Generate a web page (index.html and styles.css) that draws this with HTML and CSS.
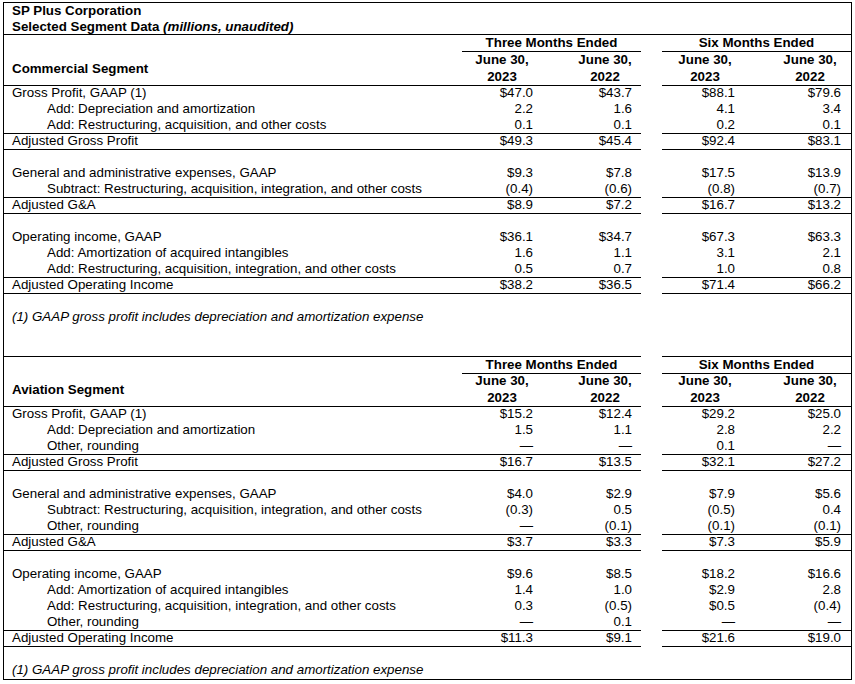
FILE: index.html
```html
<!DOCTYPE html>
<html>
<head>
<meta charset="utf-8">
<link rel="stylesheet" href="styles.css">
<title>SP Plus Corporation</title>
</head>
<body>
<div class="sheet">
  <div class="row"><div class="cell full lab b">SP Plus Corporation</div></div>
  <div class="row rule-full"><div class="cell full lab b">Selected Segment Data <i>(millions, unaudited)</i></div></div>

  <div class="row spanrow tall">
    <div class="cell"></div>
    <div class="cell span b ul">Three Months Ended</div>
    <div class="cell gap"></div>
    <div class="cell span b ul">Six Months Ended</div>
  </div>
  <div class="row head ruled">
    <div class="cell lab b mid">Commercial Segment</div>
    <div class="cell hd h1 b">June 30,<br>2023</div>
    <div class="cell hd h2 b">June 30,<br>2022</div>
    <div class="cell gap"></div>
    <div class="cell hd h3 b">June 30,<br>2023</div>
    <div class="cell hd h4 b">June 30,<br>2022</div>
  </div>

  <div class="row"><div class="cell lab">Gross Profit, GAAP (1)</div><div class="cell n1">$47.0</div><div class="cell n2">$43.7</div><div class="cell gap"></div><div class="cell n3">$88.1</div><div class="cell n4">$79.6</div></div>
  <div class="row"><div class="cell lab ind">Add: Depreciation and amortization</div><div class="cell n1">2.2</div><div class="cell n2">1.6</div><div class="cell gap"></div><div class="cell n3">4.1</div><div class="cell n4">3.4</div></div>
  <div class="row ruled"><div class="cell lab ind">Add: Restructuring, acquisition, and other costs</div><div class="cell n1">0.1</div><div class="cell n2">0.1</div><div class="cell gap"></div><div class="cell n3">0.2</div><div class="cell n4">0.1</div></div>
  <div class="row ruled"><div class="cell lab">Adjusted Gross Profit</div><div class="cell n1">$49.3</div><div class="cell n2">$45.4</div><div class="cell gap"></div><div class="cell n3">$92.4</div><div class="cell n4">$83.1</div></div>
  <div class="row"></div>
  <div class="row"><div class="cell lab">General and administrative expenses, GAAP</div><div class="cell n1">$9.3</div><div class="cell n2">$7.8</div><div class="cell gap"></div><div class="cell n3">$17.5</div><div class="cell n4">$13.9</div></div>
  <div class="row ruled"><div class="cell lab ind">Subtract: Restructuring, acquisition, integration, and other costs</div><div class="cell n1">(0.4)</div><div class="cell n2">(0.6)</div><div class="cell gap"></div><div class="cell n3">(0.8)</div><div class="cell n4">(0.7)</div></div>
  <div class="row ruled"><div class="cell lab">Adjusted G&amp;A</div><div class="cell n1">$8.9</div><div class="cell n2">$7.2</div><div class="cell gap"></div><div class="cell n3">$16.7</div><div class="cell n4">$13.2</div></div>
  <div class="row"></div>
  <div class="row"><div class="cell lab">Operating income, GAAP</div><div class="cell n1">$36.1</div><div class="cell n2">$34.7</div><div class="cell gap"></div><div class="cell n3">$67.3</div><div class="cell n4">$63.3</div></div>
  <div class="row"><div class="cell lab ind">Add: Amortization of acquired intangibles</div><div class="cell n1">1.6</div><div class="cell n2">1.1</div><div class="cell gap"></div><div class="cell n3">3.1</div><div class="cell n4">2.1</div></div>
  <div class="row ruled"><div class="cell lab ind">Add: Restructuring, acquisition, integration, and other costs</div><div class="cell n1">0.5</div><div class="cell n2">0.7</div><div class="cell gap"></div><div class="cell n3">1.0</div><div class="cell n4">0.8</div></div>
  <div class="row ruled"><div class="cell lab">Adjusted Operating Income</div><div class="cell n1">$38.2</div><div class="cell n2">$36.5</div><div class="cell gap"></div><div class="cell n3">$71.4</div><div class="cell n4">$66.2</div></div>
  <div class="row"></div>
  <div class="row"><div class="cell full lab it">(1) GAAP gross profit includes depreciation and amortization expense</div></div>
  <div class="row"></div>
  <div class="row ruled"><div class="cell"></div><div class="cell"></div><div class="cell"></div><div class="cell gap"></div><div class="cell"></div><div class="cell"></div></div>

  <div class="row spanrow">
    <div class="cell"></div>
    <div class="cell span b ul">Three Months Ended</div>
    <div class="cell gap"></div>
    <div class="cell span b ul">Six Months Ended</div>
  </div>
  <div class="row head ruled">
    <div class="cell lab b mid">Aviation Segment</div>
    <div class="cell hd h1 b">June 30,<br>2023</div>
    <div class="cell hd h2 b">June 30,<br>2022</div>
    <div class="cell gap"></div>
    <div class="cell hd h3 b">June 30,<br>2023</div>
    <div class="cell hd h4 b">June 30,<br>2022</div>
  </div>

  <div class="row"><div class="cell lab">Gross Profit, GAAP (1)</div><div class="cell n1">$15.2</div><div class="cell n2">$12.4</div><div class="cell gap"></div><div class="cell n3">$29.2</div><div class="cell n4">$25.0</div></div>
  <div class="row"><div class="cell lab ind">Add: Depreciation and amortization</div><div class="cell n1">1.5</div><div class="cell n2">1.1</div><div class="cell gap"></div><div class="cell n3">2.8</div><div class="cell n4">2.2</div></div>
  <div class="row ruled"><div class="cell lab ind">Other, rounding</div><div class="cell n1">—</div><div class="cell n2">—</div><div class="cell gap"></div><div class="cell n3">0.1</div><div class="cell n4">—</div></div>
  <div class="row ruled"><div class="cell lab">Adjusted Gross Profit</div><div class="cell n1">$16.7</div><div class="cell n2">$13.5</div><div class="cell gap"></div><div class="cell n3">$32.1</div><div class="cell n4">$27.2</div></div>
  <div class="row"></div>
  <div class="row"><div class="cell lab">General and administrative expenses, GAAP</div><div class="cell n1">$4.0</div><div class="cell n2">$2.9</div><div class="cell gap"></div><div class="cell n3">$7.9</div><div class="cell n4">$5.6</div></div>
  <div class="row"><div class="cell lab ind">Subtract: Restructuring, acquisition, integration, and other costs</div><div class="cell n1">(0.3)</div><div class="cell n2">0.5</div><div class="cell gap"></div><div class="cell n3">(0.5)</div><div class="cell n4">0.4</div></div>
  <div class="row ruled"><div class="cell lab ind">Other, rounding</div><div class="cell n1">—</div><div class="cell n2">(0.1)</div><div class="cell gap"></div><div class="cell n3">(0.1)</div><div class="cell n4">(0.1)</div></div>
  <div class="row ruled"><div class="cell lab">Adjusted G&amp;A</div><div class="cell n1">$3.7</div><div class="cell n2">$3.3</div><div class="cell gap"></div><div class="cell n3">$7.3</div><div class="cell n4">$5.9</div></div>
  <div class="row"></div>
  <div class="row"><div class="cell lab">Operating income, GAAP</div><div class="cell n1">$9.6</div><div class="cell n2">$8.5</div><div class="cell gap"></div><div class="cell n3">$18.2</div><div class="cell n4">$16.6</div></div>
  <div class="row"><div class="cell lab ind">Add: Amortization of acquired intangibles</div><div class="cell n1">1.4</div><div class="cell n2">1.0</div><div class="cell gap"></div><div class="cell n3">$2.9</div><div class="cell n4">2.8</div></div>
  <div class="row"><div class="cell lab ind">Add: Restructuring, acquisition, integration, and other costs</div><div class="cell n1">0.3</div><div class="cell n2">(0.5)</div><div class="cell gap"></div><div class="cell n3">$0.5</div><div class="cell n4">(0.4)</div></div>
  <div class="row ruled"><div class="cell lab ind">Other, rounding</div><div class="cell n1">—</div><div class="cell n2">0.1</div><div class="cell gap"></div><div class="cell n3">—</div><div class="cell n4">—</div></div>
  <div class="row ruled"><div class="cell lab">Adjusted Operating Income</div><div class="cell n1">$11.3</div><div class="cell n2">$9.1</div><div class="cell gap"></div><div class="cell n3">$21.6</div><div class="cell n4">$19.0</div></div>
  <div class="row"></div>
  <div class="row last"><div class="cell full lab it">(1) GAAP gross profit includes depreciation and amortization expense</div></div>
</div>
</body>
</html>
```

FILE: styles.css
```css
html, body {
  margin: 0;
  padding: 0;
  background: #fff;
}
body {
  font-family: "Liberation Sans", Arial, sans-serif;
  font-size: 13.33px;
  color: #000;
}
.sheet {
  box-sizing: border-box;
  width: 849px;
  margin: 2px 0 0 3px;
  border: 1px solid #000;
}
.row {
  display: grid;
  grid-template-columns: 458px 78px 101px 21px 83px 106px;
  height: 16px;
  box-sizing: border-box;
}
.row.tall { height: 17px; }
.row.head { height: 33px; }
.row.last { height: 17px; }
.rule-full { border-bottom: 1px solid #000; }
.cell {
  box-sizing: border-box;
  line-height: 16px;
  white-space: nowrap;
  min-width: 0;
}
.ruled > .cell:not(.gap) { border-bottom: 1px solid #000; }
.full { grid-column: 1 / -1; }
.span { grid-column: span 2; text-align: center; }
.spanrow .span.ul { border-bottom: 1px solid #000; }
.lab { padding-left: 8px; }
.ind { padding-left: 43px; }
.mid { display: flex; align-items: center; }
.b { font-weight: bold; }
.it { font-style: italic; }
.n1, .n2, .n3, .n4 { text-align: right; }
.n1 { padding-right: 7px; }
.n2 { padding-right: 9px; }
.n3 { padding-right: 10px; }
.n4 { padding-right: 10px; }
.hd {
  text-align: center;
  line-height: 16.5px;
}
.h1 { padding-left: 2px; }
.h2 { padding-left: 29px; }
.h3 { padding-left: 3px; }
.h4 { padding-left: 24px; }
```
